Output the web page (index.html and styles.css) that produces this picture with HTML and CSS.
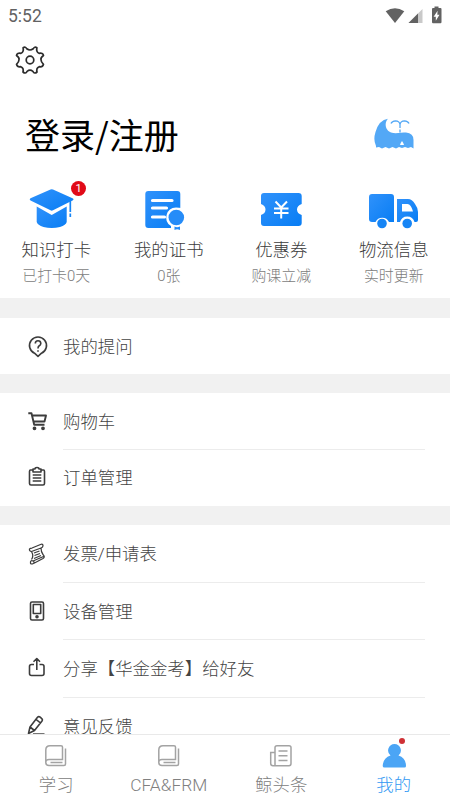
FILE: index.html
```html
<!DOCTYPE html>
<html lang="zh-CN">
<head>
<meta charset="utf-8">
<title>我的</title>
<link rel="stylesheet" href="styles.css">
</head>
<body>
<div class="app">
  <header class="status">
    <span class="time">5:52</span>
    <svg class="status-icons" width="60" height="20" viewBox="0 0 60 20" fill="#626262">
      <path d="M.7 5.2Q10 -.8 19.3 5.2L10 17Z"/>
      <path d="M37.5 3v14H23.500Z" fill="#c9c9c9"/><path d="M33 7.500V17h-9.500Z"/>
      <path d="M49.500 2V.500h4V2H55.500q1 0 1 1v13q0 1.200-1 1.200h-7.500q-1 0-1-1.200V3q0-1 1-1Z"/>
      <path d="M52.600 4.700l-4 6h2.200v4l3.700-6h-2.200Z" fill="#fff"/>
    </svg>
  </header>
  <div class="toolbar">
    <svg width="30" height="30" viewBox="-15 -15 30 30" fill="none" stroke="#2c2c2c" stroke-width="1.700" stroke-linejoin="round">
      <path d="M-3.200-11.200Q0-8.800 3.200-11.200Q4.600-13.800 6.900-12.200Q6-8 9-6.700Q13-7.500 13.500-4.500Q10.400-2.500 11-.2Q11 2 13.500 4.300Q12.500 7.500 9.200 6.700Q6 8 7 12Q4.500 14.300 2.900 11.300Q0 9-2.900 11.300Q-4.500 14.300-7 12Q-6 8-9.200 6.700Q-12.500 7.500-13.500 4.300Q-11 2-11-.2Q-10.400-2.500-13.500-4.500Q-13-7.500-9-6.700Q-6-8-6.900-12.200Q-4.600-13.800-3.200-11.200Z"/>
      <circle r="3.800"/>
    </svg>
  </div>
  <section class="account">
    <h1>登录/注册</h1>
    <svg width="42" height="34" viewBox="0 0 42 34">
      <path d="M14 .800C10 5 11 13 18 14.700C21 15.800 28 14.500 32 14.500Q39.500 15 39.500 22V30.500L37 29L34 30L31 29L28 30L25 29L22 30.500L18.500 29L15 30.500L11.500 29L8 30.500L5 29L2 29.500V28Q-1 22 1.500 14Q5 2 14 .800Z" fill="#53a8f6"/>
      <path d="M26 14.500V11.500M26 10V6.500Q25.500 3 21.500 2.800Q18 3 17 5.500M26 6.500Q26.500 3 30.500 2.800Q34 3 35 5.500" fill="none" stroke="#53a8f6" stroke-width="1.300"/>
      <path d="M26 27Q26.500 25 28 23Q29.500 25 30 27Z" fill="#fff"/>
    </svg>
  </section>
  <section class="shortcuts">
    <svg class="defs" width="0" height="0"><defs><linearGradient id="blue" x1="0" y1="0" x2="1" y2="1"><stop stop-color="#3092fb"/><stop offset="1" stop-color="#087df4"/></linearGradient></defs></svg>
    <div class="shortcut">
      <svg width="60" height="48" viewBox="0 0 60 48">
        <path d="M24.500 5.600Q25.700 5 27 5.600L46.500 14.200Q48.500 15.300 46.500 16.400L27 26.300Q25.700 27 24.500 26.300L4.500 16.400Q2.800 15.300 4.500 14.200Z" fill="url(#blue)"/>
        <path d="M10.700 22.500L25.700 31L40.700 22.500V38Q40 41 34 43Q25.700 45 17.500 43Q11.500 41 10.700 38Z" fill="url(#blue)"/>
        <path d="M44.300 17V28M44.300 29.500V33" stroke="#1685f5" stroke-width="1.700"/>
      </svg>
      <span class="badge">1</span>
      <b>知识打卡</b><small>已打卡0天</small>
    </div>
    <div class="shortcut">
      <svg width="60" height="48" viewBox="0 0 60 48">
        <rect x="6.300" y="7" width="35" height="37" rx="3" fill="url(#blue)"/>
        <path d="M13.500 16.500H33M13.500 24H27.500M13.500 33H25.500" stroke="#fff" stroke-width="3.200" stroke-linecap="round"/>
        <path d="M37 23.500A10 10 0 0 0 32 42V45H43V24Z" fill="#fff"/>
        <circle cx="37.300" cy="33.500" r="7.800" fill="#268cf8"/>
        <path d="M35.500 42.500Q38 43.800 41 42.500V46Q38 44.500 35.500 46Z" fill="#268cf8"/>
      </svg>
      <b>我的证书</b><small>0张</small>
    </div>
    <div class="shortcut">
      <svg width="60" height="48" viewBox="0 0 60 48">
        <path d="M13 9H47.500Q50.700 9 50.700 12V20Q46 21.500 46 25.500Q46 29.500 50.700 31V39Q50.700 42 47.500 42H13Q10 42 10 39V31Q14.500 29.500 14.500 25.500Q14.500 21.500 10 20V12Q10 9 13 9Z" fill="url(#blue)"/>
        <path d="M24.500 17.500L30.200 23.500L36 17.500M30.200 23.500V34.500M23 24.500H37.500M23 29H37.500" fill="none" stroke="#fff" stroke-width="2"/>
      </svg>
      <b>优惠券</b><small>购课立减</small>
    </div>
    <div class="shortcut">
      <svg width="60" height="48" viewBox="0 0 60 48">
        <path d="M8 10H27Q30 10 30 13V38H25A7.500 7.500 0 0 0 11.500 38H8Q5 38 5 35V13Q5 10 8 10Z" fill="url(#blue)"/>
        <path d="M33 15H44Q48 15 51 20Q54 24 54 28V36Q54 38 52 38H50.500A7.500 7.500 0 0 0 36 38H33Z" fill="url(#blue)"/>
        <path d="M38 20H43.500Q47 20 49 27.500H38Z" fill="#fff"/>
        <circle cx="18" cy="39.500" r="4.800" fill="#1685f5"/><circle cx="43.200" cy="39.500" r="4.800" fill="#1685f5"/>
      </svg>
      <b>物流信息</b><small>实时更新</small>
    </div>
  </section>
  <main class="menu">
    <section class="group single">
      <div class="row">
        <svg viewBox="0 0 22 24"><path d="M11 21.300L7.500 18.200A8.500 8.500 0 1 1 14.500 18.200Z"/><path d="M8.300 8.500Q8.300 5.800 11 5.800T13.800 8.400Q13.800 10 12 11Q11 11.700 11 13.500M11 15.200V16.800"/></svg>
        <span>我的提问</span>
      </div>
    </section>
    <section class="group">
      <div class="row">
        <svg viewBox="0 0 22 24"><path d="M1.300 3.200H4.500L7.200 14.700H17.500M5 5.500H19L17.500 11.500H6.500" stroke-width="1.900"/><circle cx="7.500" cy="18.300" r="1.100" class="solid"/><circle cx="16" cy="18.300" r="1.100" class="solid"/></svg>
        <span>购物车</span>
      </div>
      <div class="row">
        <svg viewBox="0 0 22 24"><path d="M6 4H3.500Q2.500 4 2.500 5.500V17.500Q2.500 19 4 19H16Q17.500 19 17.500 17.500V5.500Q17.500 4 16.500 4H14M6 3V6H14V3H12Q12 1.500 10 1.500T8 3Z"/><path d="M5.700 9H14.300M5.700 12H14.300M5.700 15H14.300"/></svg>
        <span>订单管理</span>
      </div>
    </section>
    <section class="group">
      <div class="row">
        <svg viewBox="0 0 22 24"><g stroke-width="1.250"><path d="M13.500 1.500Q16 .500 16 2.800Q16 4.500 14 5L4.500 8.500Q2 8 2.500 6Q3 5 5 5L13.500 1.500M4.500 8.500Q7 13 4.500 16.500M14 5Q14 9 16 11.500Q18.500 14 16 15.500L6.500 20.500Q3 22 3.500 19Q4 17 6 18Q8 19 6.500 20.500M6 18L16.500 13.500"/><path d="M7 10L12.500 8M7.500 12.500L13 10.500M7 15.500L14 12.500"/></g></svg>
        <span>发票/申请表</span>
      </div>
      <div class="row">
        <svg viewBox="0 0 22 24"><rect x="3.500" y="2" width="13" height="18" rx="1.500"/><rect x="6.300" y="4.500" width="7.400" height="9"/><circle cx="10" cy="16.700" r="1" class="solid"/></svg>
        <span>设备管理</span>
      </div>
      <div class="row">
        <svg viewBox="0 0 22 24"><path d="M7 7.500H4.500Q2.500 7.500 2.500 9.500V16.500Q2.500 18.500 4.500 18.500H15Q17 18.500 17 16.500V9.500Q17 7.500 15 7.500H12.500M9.800 13V1.500M6.500 4.800L9.800 1.500L13 4.800"/></svg>
        <span>分享【华金金考】给好友</span>
      </div>
      <div class="row">
        <svg viewBox="0 0 22 24"><path d="M1.500 18.500L3 12L10.500 2.300Q11.700 1 13.200 2.200L14.500 3.300Q16 4.500 15 6L7.500 15.500ZM3 12L7.500 15.500M9 4.300L13.500 8"/><path d="M6 18.800H17.500" stroke-width="1"/></svg>
        <span>意见反馈</span>
      </div>
    </section>
  </main>
  <nav class="tabs">
    <div class="tab">
      <svg viewBox="0 0 24 24"><path d="M6 1.700H17Q18.500 1.700 18.500 3V15.500H5Q1.800 15.500 1.800 18.500Q1.800 21.500 5 21.500H20Q21.500 21.500 21.500 20V4.500M1.800 18.500V6Q1.800 1.700 6 1.700M6.500 18.500H18.500"/></svg>
      <span>学习</span>
    </div>
    <div class="tab">
      <svg viewBox="0 0 24 24"><path d="M6 1.700H17Q18.500 1.700 18.500 3V15.500H5Q1.800 15.500 1.800 18.500Q1.800 21.500 5 21.500H20Q21.500 21.500 21.500 20V4.500M1.800 18.500V6Q1.800 1.700 6 1.700M6.500 18.500H18.500"/></svg>
      <span>CFA&amp;FRM</span>
    </div>
    <div class="tab">
      <svg viewBox="0 0 24 24"><path d="M6 21.700V3.500Q6 1.700 8 1.700H20Q22 1.700 22 3.500V19.500Q22 21.700 20 21.700H4Q1.700 21.700 1.700 19.500V8.500H6M9.500 7H18.500M9.500 11.700H18.500M9.500 16.500H18.500"/></svg>
      <span>鲸头条</span>
    </div>
    <div class="tab active">
      <svg viewBox="0 0 24 24"><path d="M12.500 0A6.500 6.500 0 0 1 16.500 11.500Q24 14 24 22Q24 23.500 22.500 23.500H2.500Q.700 23.500 .700 22Q1 14 8.500 11.500A6.500 6.500 0 0 1 12.500 0Z"/></svg>
      <i class="dot"></i>
      <span>我的</span>
    </div>
  </nav>
</div>
</body>
</html>
```
FILE: styles.css
```css
* { box-sizing: border-box; }
body {
  margin: 0;
  background: #fff;
  color: #444;
  font-family: Roboto, "Noto Sans CJK SC", sans-serif;
  font-weight: 300;
}
svg { display: block; flex: none; }
.app { height: 800px; display: flex; flex-direction: column; overflow: hidden; }
.status { height: 32px; flex: none; padding: 0 5px 0 8px; display: flex; align-items: center; justify-content: space-between; }
.status-icons { margin: -1px 0 0; }
.time { font-size: 17.500px; font-weight: 400; color: #626262; }
.toolbar { height: 56px; flex: none; padding: 13px 15px; }
.account { height: 92px; flex: none; padding: 2px 35px 0 25px; display: flex; align-items: center; justify-content: space-between; }
.account svg { margin-right: -1px; }
.account h1 { margin: 0; padding-bottom: 3px; font-family: "Noto Sans CJK SC", sans-serif; font-size: 35px; font-weight: 400; line-height: 50px; color: #000; }
.shortcuts { height: 118px; flex: none; padding-top: 4px; display: grid; grid-template-columns: repeat(4, 1fr); position: relative; }
.defs { position: absolute; }
.shortcut { position: relative; display: flex; flex-direction: column; align-items: center; white-space: nowrap; }
.shortcut b { margin-top: 5px; font-size: 17.400px; line-height: 26px; font-weight: 300; color: #3c3c3c; }
.shortcut small { margin-top: 1px; font-size: 14.900px; line-height: 25px; color: #7c7c7c; }
.badge { position: absolute; left: 71px; top: -3px; width: 15px; height: 15px; border-radius: 50%; background: #e10a18; color: #fff; font-size: 11px; line-height: 15px; text-align: center; font-weight: 400; }
.menu { flex: 1; min-height: 0; overflow: hidden; }
.group { border-top: 19px solid #f1f1f1; padding: 0 25px 0 27px; }
.group.single { border-top-width: 20px; }
.row { height: 57.500px; display: grid; grid-template-columns: 22px 1fr; column-gap: 14px; align-items: center; }
.group.single .row { height: 56px; }
.group:nth-child(2) .row { height: 56.500px; }
.row svg { width: 22px; height: 24px; margin-top: 2px; fill: none; stroke: #3c3c3c; stroke-width: 1.600; stroke-linejoin: round; }
.row .solid { fill: #3c3c3c; }
.row span { height: 100%; padding-bottom: 2px; display: flex; align-items: center; font-size: 17.400px; }
.row + .row { margin-top: -1px; height: 58.500px; }
.group:nth-child(2) .row + .row { height: 57.500px; }
.row + .row span { border-top: 1px solid #ececec; }
.tabs { height: 66px; flex: none; border-top: 1px solid #e9e9e9; background: #fff; display: grid; grid-template-columns: repeat(4, 1fr); }
.tab { position: relative; padding-top: 9px; display: flex; flex-direction: column; align-items: center; color: #808080; font-size: 17.400px; }
.tab svg { width: 24px; height: 24px; fill: none; stroke: #a3a3a3; stroke-width: 1.500; }
.tab span { margin-top: 4px; line-height: 26px; }
.tab.active { color: #3299f3; }
.tab.active svg { fill: #4ba5f5; stroke: none; }
.dot { position: absolute; left: 61px; top: 3px; width: 6px; height: 6px; border-radius: 50%; background: #cf3035; }
```
